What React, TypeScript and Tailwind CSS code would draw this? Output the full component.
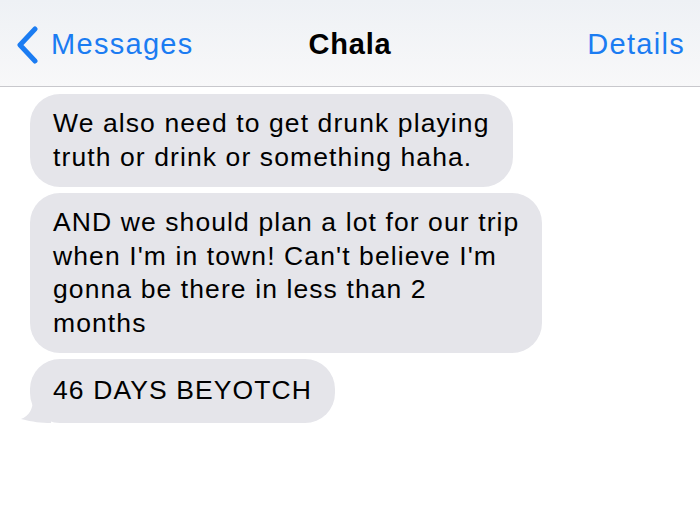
import React from "react";

const font = { fontFamily: '"Liberation Sans", Arial, sans-serif' };

function Bubble({ children, tail = false }: { children: React.ReactNode; tail?: boolean }) {
  return (
    <div className="relative self-start">
      <div
        className={`rounded-[30px] bg-[#e5e5ea] px-[23px] text-[26.5px] leading-[33.5px] tracking-[1.1px] text-black ${
          tail ? "py-[15px]" : "py-[13px]"
        }`}
      >
        {children}
      </div>
      {tail && (
        <svg
          className="absolute bottom-0 left-[-9px]"
          width="30"
          height="24"
          viewBox="0 0 30 24"
        >
          <path d="M30 0 L30 24 C20 24 12 23 0 20 C8 17 12 10 12 0 Z" fill="#e5e5ea" />
        </svg>
      )}
    </div>
  );
}

export default function App() {
  return (
    <div className="h-[525px] w-[700px] overflow-hidden bg-white" style={font}>
      <div className="flex h-[87px] items-center border-b border-[#c8c8cc] bg-gradient-to-b from-[#eef1f5] to-[#f8f8f9] px-[15px] pt-[4px]">
        <div className="flex flex-1 items-center gap-[12px] text-[#1b7cf2]">
          <svg width="24" height="38" viewBox="0 0 24 38">
            <path d="M20 3 L5 19 L20 35" fill="none" stroke="#1b7cf2" strokeWidth="5" strokeLinecap="round" strokeLinejoin="round" />
          </svg>
          <span className="text-[29px] tracking-[1.3px]">Messages</span>
        </div>
        <div className="text-[29px] font-bold tracking-[0.8px] text-black">Chala</div>
        <div className="flex flex-1 justify-end text-[29px] tracking-[1.3px] text-[#1b7cf2]">Details</div>
      </div>
      <div className="flex flex-col gap-[6px] px-[30px] pt-[7px]">
        <Bubble>
          We also need to get drunk playing
          <br />
          truth or drink or something haha.
        </Bubble>
        <Bubble>
          AND we should plan a lot for our trip
          <br />
          when I'm in town! Can't believe I'm
          <br />
          gonna be there in less than 2
          <br />
          months
        </Bubble>
        <Bubble tail>46 DAYS BEYOTCH</Bubble>
      </div>
    </div>
  );
}
